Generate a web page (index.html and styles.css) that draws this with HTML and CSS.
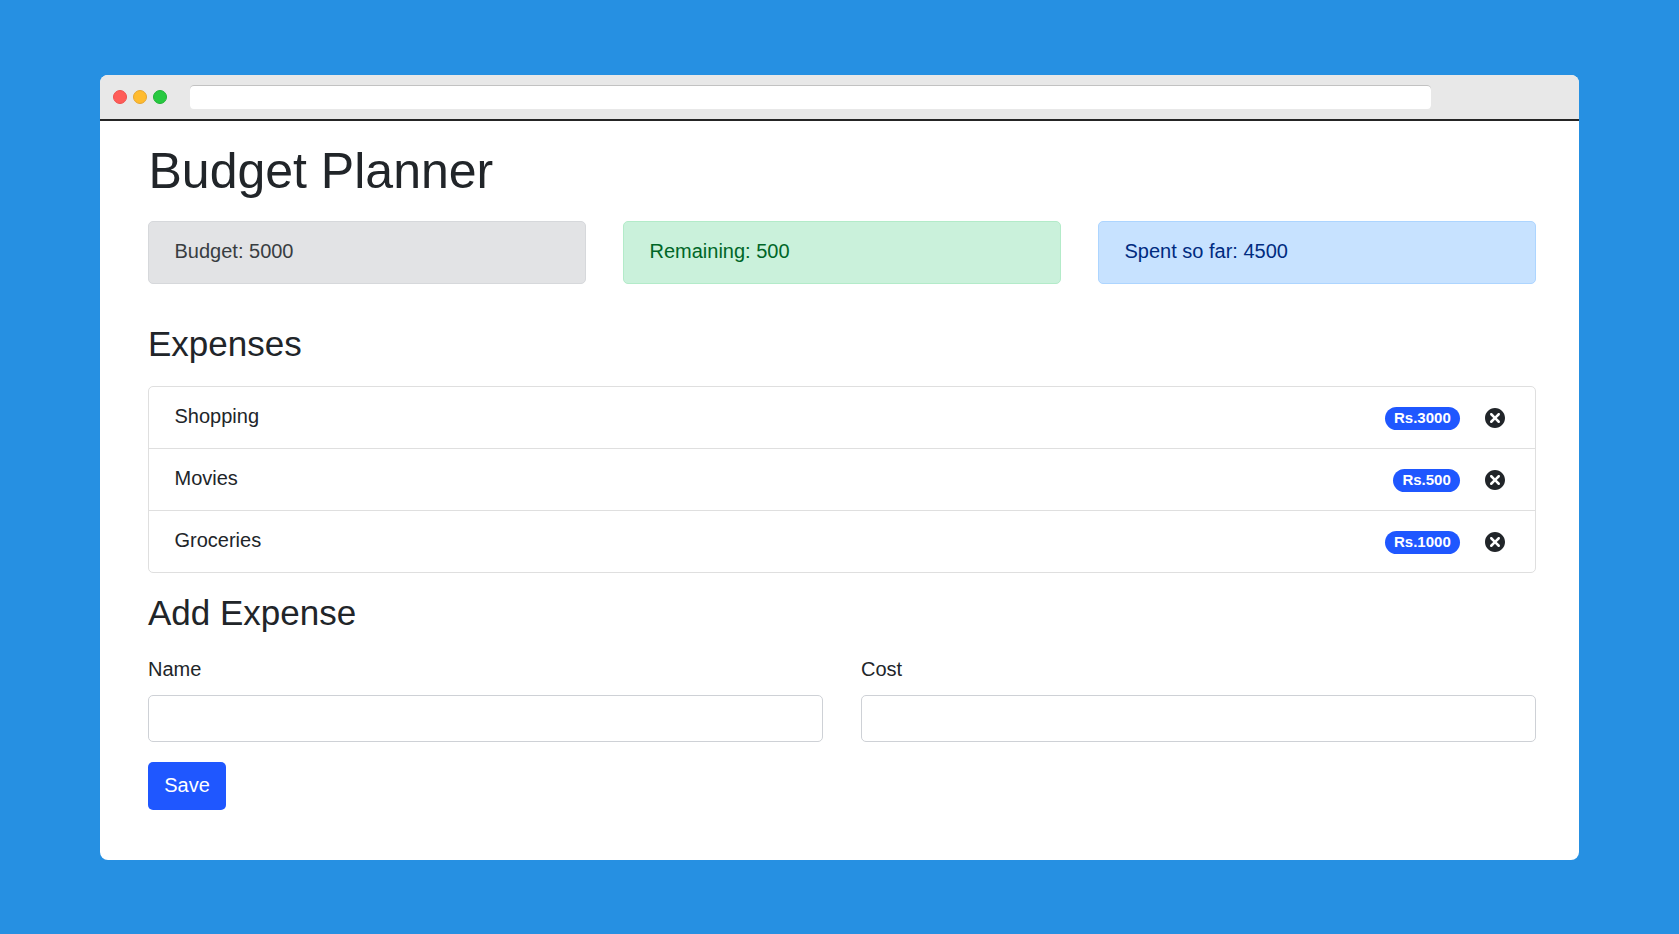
FILE: index.html
```html
<!DOCTYPE html>
<html lang="en">
<head>
<meta charset="utf-8">
<title>Budget Planner</title>
<link rel="stylesheet" href="styles.css">
</head>
<body>
<svg class="sprite" aria-hidden="true">
  <symbol id="delete" viewBox="0 0 24 24"><path d="M12 4c-4.419 0-8 3.582-8 8s3.581 8 8 8 8-3.582 8-8-3.581-8-8-8zm3.707 10.293c.391.391.391 1.023 0 1.414-.195.195-.451.293-.707.293s-.512-.098-.707-.293l-2.293-2.293-2.293 2.293c-.195.195-.451.293-.707.293s-.512-.098-.707-.293c-.391-.391-.391-1.023 0-1.414l2.293-2.293-2.293-2.293c-.391-.391-.391-1.023 0-1.414s1.023-.391 1.414 0l2.293 2.293 2.293-2.293c.391-.391 1.023-.391 1.414 0s.391 1.023 0 1.414l-2.293 2.293 2.293 2.293z"/></symbol>
</svg>
<div class="window">
  <header class="titlebar">
    <div class="dots"><span class="dot red"></span><span class="dot yellow"></span><span class="dot green"></span></div>
    <div class="address"></div>
  </header>
  <main class="content">
    <h1>Budget Planner</h1>
    <section class="summary">
      <div class="alert alert-secondary">Budget: 5000</div>
      <div class="alert alert-success">Remaining: 500</div>
      <div class="alert alert-primary">Spent so far: 4500</div>
    </section>
    <h3 class="expenses-title">Expenses</h3>
    <ul class="list">
      <li><span class="name">Shopping</span><span class="badge">Rs.3000</span><svg class="icon"><use href="#delete"/></svg></li>
      <li><span class="name">Movies</span><span class="badge">Rs.500</span><svg class="icon"><use href="#delete"/></svg></li>
      <li><span class="name">Groceries</span><span class="badge">Rs.1000</span><svg class="icon"><use href="#delete"/></svg></li>
    </ul>
    <h3 class="add-title">Add Expense</h3>
    <form>
      <div class="fields">
        <div><label for="name">Name</label><input id="name" type="text"></div>
        <div><label for="cost">Cost</label><input id="cost" type="text"></div>
      </div>
      <button type="button">Save</button>
    </form>
  </main>
</div>
</body>
</html>
```
FILE: styles.css
```css
* { box-sizing: border-box; }
body {
  margin: 0;
  height: 934px;
  padding: 75px 100px 74px;
  background: #2690e2;
  color: #212529;
  font: 20px/30px "Liberation Sans", Arial, sans-serif;
}
.sprite { display: none; }
.window {
  height: 785px;
  background: #fff;
  border-radius: 8px;
  overflow: hidden;
}
.titlebar {
  display: flex;
  height: 46px;
  padding: 10px 148px 0 13px;
  background: #e8e8e8;
  border-bottom: 2px solid #252525;
}
.dots { display: flex; gap: 6px; width: 77px; padding-top: 5px; }
.dot { width: 14px; height: 14px; border-radius: 50%; border: 1px solid; }
.red { background: #ff5c58; border-color: #ee504d; }
.yellow { background: #ffbb2e; border-color: #e5a631; }
.green { background: #27c940; border-color: #1eb335; }
.address {
  flex: 1;
  height: 24px;
  background: #fff;
  border-radius: 4px;
  box-shadow: inset 0 1px 0 #c2c2c2;
}
.content { padding: 20px 43px 0 48px; }
h1, h3 { margin: 0; font-weight: normal; line-height: 1.2; }
h1 { padding-left: 0.5px; font-size: 50px; }
h3 { font-size: 35px; }
.summary { display: grid; grid-template-columns: repeat(3, 1fr); gap: 37px; margin-top: 20px; }
.alert { height: 63px; padding: 14px 25.5px; border: 1px solid; border-radius: 5px; }
.alert-secondary { background: #e2e3e5; border-color: #d6d8db; color: #383d41; }
.alert-success { background: #caf1db; border-color: #b3ebc9; color: #006627; }
.alert-primary { background: #c7e2ff; border-color: #add5ff; color: #002b80; }
.expenses-title { margin-top: 39px; }
.list {
  margin: 21px 0 0;
  padding: 0;
  list-style: none;
  border: 1px solid #dfdfdf;
  border-radius: 5px;
}
.list li { display: flex; align-items: center; height: 62px; padding: 0 25px 0 25.5px; border-bottom: 1px solid #dfdfdf; }
.list li:last-child { height: 61px; border-bottom: 0; }
.name { flex: 1; padding-bottom: 3px; }
.badge {
  height: 23px;
  margin: 2px 20px 0 0;
  padding: 0 9.25px;
  border-radius: 12px;
  background: #1f57ff;
  color: #fff;
  font-size: 15px;
  font-weight: bold;
  line-height: 22px;
}
.icon { width: 30px; height: 30px; fill: #212529; }
.add-title { margin-top: 19px; }
.fields { display: grid; grid-template-columns: 1fr 1fr; gap: 38px; margin-top: 20px; }
label { display: block; margin-bottom: 11px; }
input {
  display: block;
  width: 100%;
  height: 47px;
  padding: 0 15px;
  background: #fff;
  border: 1px solid #ced1d6;
  border-radius: 5px;
  font: inherit;
}
button {
  display: block;
  width: 78px;
  height: 48px;
  margin-top: 20px;
  padding: 0 0 3px;
  border: 0;
  border-radius: 5px;
  background: #1f57ff;
  color: #fff;
  font: inherit;
}
```
